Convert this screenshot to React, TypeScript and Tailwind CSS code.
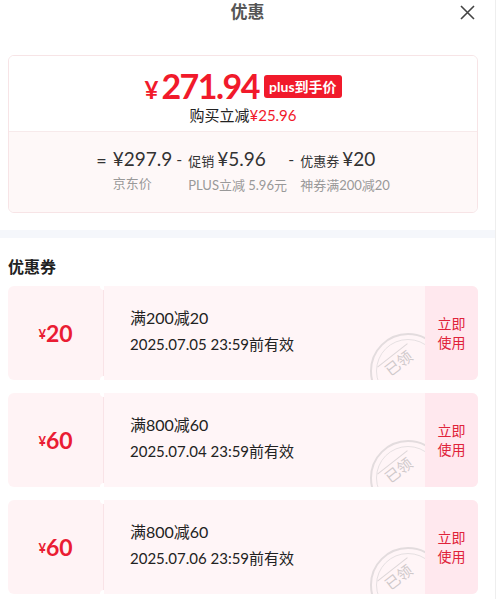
import React from "react";

const coupons = [
  { amount: "20", title: "满200减20", expire: "2025.07.05 23:59前有效" },
  { amount: "60", title: "满800减60", expire: "2025.07.04 23:59前有效" },
  { amount: "60", title: "满800减60", expire: "2025.07.06 23:59前有效" },
];

// "已领" stamp peeking out at the bottom-right corner of a coupon
function Stamp() {
  return (
    <div className="absolute right-[-21px] bottom-[-29px] flex h-[76px] w-[76px] items-center justify-center rounded-full border-2 border-[#e3dcde]">
      <div className="flex h-[64px] w-[64px] items-center justify-center rounded-full border border-[#e6e0e2]">
        <span className="translate-x-[-10px] translate-y-[-9px] rotate-[-38deg] border-t border-[#ddd6d8] px-1 text-[15px] leading-[18px] text-[#cfc9cb]">
          已领
        </span>
      </div>
    </div>
  );
}

export default function App() {
  return (
    <div
      className="flex h-[599px] w-[500px] overflow-hidden bg-white"
      style={{ fontFamily: "Lato, 'Noto Sans CJK SC', sans-serif" }}
    >
      <div className="flex w-[495px] flex-col">
        {/* header */}
        <div className="relative flex h-[24px] items-center justify-center">
          <span className="text-[17px] font-bold text-[#555]">优惠</span>
          <svg
            className="absolute top-[5px] right-[20px]"
            width="15"
            height="15"
            viewBox="0 0 15 15"
          >
            <path d="M1 1L14 14M14 1L1 14" stroke="#444" strokeWidth="1.6" />
          </svg>
        </div>

        {/* price summary */}
        <div className="mx-2 mt-[31px] w-[470px] overflow-hidden rounded-md border border-[#f7e4e6]">
          <div className="flex h-[75px] flex-col items-center bg-white pt-[14px]">
            <div className="flex items-center gap-[5px]">
              <span className="flex items-baseline font-bold text-[#f11a2b]">
                <span className="mr-[3px] text-[24px] leading-none">¥</span>
                <span className="text-[34px] leading-[32px] tracking-[-1.5px]">
                  271.94
                </span>
              </span>
              <span className="rounded-[3px] bg-[#f11a2b] px-[5px] text-[14px] leading-[23px] font-bold text-white">
                plus到手价
              </span>
            </div>
            <div className="mt-[4px] text-[15px] leading-[18px] text-[#222]">
              购买立减<span className="text-[#f11a2b]">¥25.96</span>
            </div>
          </div>
          <div className="flex h-[81px] justify-center border-t border-[#f7eaeb] bg-[#fef8f8] pt-[17px]">
            <div className="flex text-[#333]">
              <span className="mt-[1px] mr-[6px] text-[18px] leading-[20px]">=</span>
              <div className="flex flex-col">
                <span className="text-[19px] leading-[20px]">¥297.9</span>
                <span className="mt-[6px] text-[13px] leading-[16px] text-[#999]">
                  京东价
                </span>
              </div>
              <span className="mr-[6px] ml-[4px] text-[16px] leading-[20px]">-</span>
              <div className="flex w-[96px] flex-col">
                <span className="flex items-baseline text-[19px] leading-[20px]">
                  <span className="mr-[3px] text-[13px]">促销</span>¥5.96
                </span>
                <span className="mt-[6px] text-[13px] leading-[16px] whitespace-nowrap text-[#999]">
                  PLUS立减 5.96元
                </span>
              </div>
              <span className="mr-[6px] ml-[4px] text-[16px] leading-[20px]">-</span>
              <div className="flex flex-col">
                <span className="flex items-baseline text-[19px] leading-[20px]">
                  <span className="mr-[3px] text-[13px]">优惠券</span>¥20
                </span>
                <span className="mt-[6px] text-[13px] leading-[16px] whitespace-nowrap text-[#999]">
                  神券满200减20
                </span>
              </div>
            </div>
          </div>
        </div>

        {/* separator band */}
        <div className="mt-[17px] h-[8px] bg-[#f5f7fb]" />

        {/* coupon list */}
        <div className="px-2">
          <div className="mt-[19px] text-[16px] leading-[20px] font-bold text-[#222]">
            优惠券
          </div>
          <div className="mt-[9px] flex flex-col gap-[13px]">
            {coupons.map((c, i) => (
              <div
                key={i}
                className="relative flex h-[94px] w-[470px] overflow-hidden rounded-md bg-[#fff3f5]"
              >
                <div className="flex w-[96px] items-center justify-center border-r border-[#f9e3e7] font-bold text-[#ea1c33]">
                  <span className="mt-[4px] text-[13px]">¥</span>
                  <span className="text-[23px]">{c.amount}</span>
                </div>
                {/* notches */}
                <span className="absolute top-[-4px] left-[92px] h-[8px] w-[8px] rounded-full bg-white" />
                <span className="absolute bottom-[-4px] left-[92px] h-[8px] w-[8px] rounded-full bg-white" />
                <div className="relative flex flex-1 flex-col justify-center overflow-hidden bg-[#fff5f7] pb-[4px] pl-[26px] text-[#222]">
                  <span className="text-[16px] leading-[20px]">{c.title}</span>
                  <span className="mt-[6px] text-[15px] leading-[20px]">{c.expire}</span>
                  <Stamp />
                </div>
                <div className="flex w-[53px] items-center justify-center bg-[#ffe8ee] text-[14px] leading-[19px] text-[#e0233a]">
                  <span className="w-[29px] text-center">立即使用</span>
                </div>
              </div>
            ))}
          </div>
        </div>
      </div>
      <div className="w-[5px] border-l border-[#eeeeee] bg-white" />
    </div>
  );
}
